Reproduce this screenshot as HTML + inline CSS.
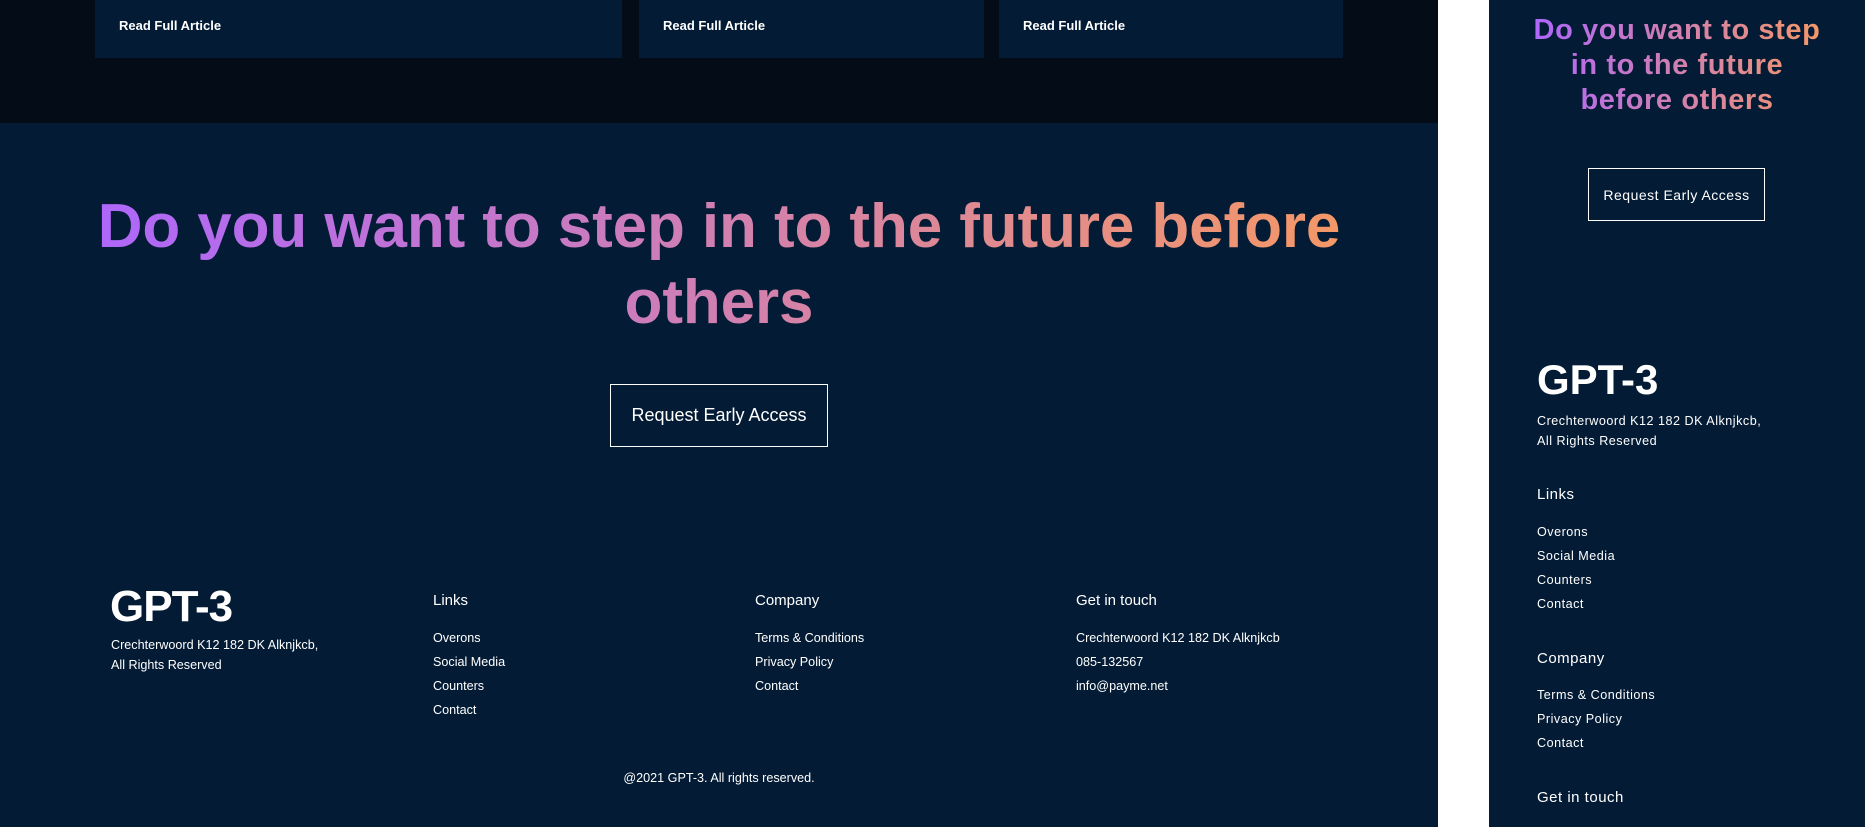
<!DOCTYPE html>
<html><head><meta charset="utf-8"><style>
*{margin:0;padding:0;box-sizing:border-box}
body{width:1865px;height:827px;overflow:hidden;background:#fff;font-family:"Liberation Sans",sans-serif;color:#fff;position:relative}
.abs{position:absolute;white-space:nowrap}
#left{position:absolute;left:0;top:0;width:1438px;height:827px;background:#031b34;overflow:hidden}
#top{position:absolute;left:0;top:0;width:1438px;height:123px;background:#040c17}
.card{position:absolute;top:0;height:58px;background:#031b34}
.card span{position:absolute;left:24px;top:18px;font-weight:bold;font-size:13px}
.grad{display:inline-block;background:linear-gradient(90deg,#ae67fa,#f49867);-webkit-background-clip:text;background-clip:text;color:transparent}
h1{position:absolute;left:0;width:1438px;top:189px;text-align:center;font-size:62px;line-height:76px;font-weight:bold;letter-spacing:-0.1px}
.btn{position:absolute;border:1px solid #fff;display:flex;align-items:center;justify-content:center}
.logo{font-weight:bold;font-size:44px;letter-spacing:-1px}
.sm{font-size:12.6px}
.hd{font-size:15px}
#right{position:absolute;left:1489px;top:0;width:376px;height:827px;background:#031b34;overflow:hidden}
</style></head><body>
<div id="left">
 <div id="top"></div>
 <div class="card" style="left:95px;width:527px"><span>Read Full Article</span></div>
 <div class="card" style="left:639px;width:345px"><span>Read Full Article</span></div>
 <div class="card" style="left:999px;width:344px"><span>Read Full Article</span></div>
 <h1><span class="grad">Do you want to step in to the future before<br>others</span></h1>
 <div class="btn" style="left:610px;top:384px;width:218px;height:63px;font-size:18px">Request Early Access</div>
 <div class="abs logo" style="left:110px;top:582px">GPT-3</div>
 <div class="abs sm" style="left:111px;top:638px">Crechterwoord K12 182 DK Alknjkcb,</div>
 <div class="abs sm" style="left:111px;top:658px">All Rights Reserved</div>
 <div class="abs hd" style="left:433px;top:592px">Links</div>
 <div class="abs sm" style="left:433px;top:631px">Overons</div>
 <div class="abs sm" style="left:433px;top:655px">Social Media</div>
 <div class="abs sm" style="left:433px;top:679px">Counters</div>
 <div class="abs sm" style="left:433px;top:703px">Contact</div>
 <div class="abs hd" style="left:755px;top:592px">Company</div>
 <div class="abs sm" style="left:755px;top:631px">Terms &amp; Conditions</div>
 <div class="abs sm" style="left:755px;top:655px">Privacy Policy</div>
 <div class="abs sm" style="left:755px;top:679px">Contact</div>
 <div class="abs hd" style="left:1076px;top:592px">Get in touch</div>
 <div class="abs sm" style="left:1076px;top:631px">Crechterwoord K12 182 DK Alknjkcb</div>
 <div class="abs sm" style="left:1076px;top:655px">085-132567</div>
 <div class="abs sm" style="left:1076px;top:679px">info@payme.net</div>
 <div class="abs sm" style="left:0;width:1438px;text-align:center;top:771px">@2021 GPT-3. All rights reserved.</div>
</div>
<div id="right">
 <div class="abs" style="left:0;width:376px;top:13px;text-align:center;font-size:29px;font-weight:bold;line-height:35px;white-space:normal;letter-spacing:0.6px"><span class="grad">Do you want to step<br>in to the future<br>before others</span></div>
 <div class="btn" style="left:99px;top:168px;width:177px;height:53px;font-size:14px;letter-spacing:0.5px">Request Early Access</div>
 <div class="abs logo" style="left:48px;top:356px;font-size:42px;letter-spacing:0">GPT-3</div>
 <div class="abs sm" style="left:48px;top:414px;letter-spacing:0.5px">Crechterwoord K12 182 DK Alknjkcb,</div>
 <div class="abs sm" style="left:48px;top:434px;letter-spacing:0.5px">All Rights Reserved</div>
 <div class="abs hd" style="left:48px;top:486px;letter-spacing:0.5px">Links</div>
 <div class="abs sm" style="left:48px;top:525px;letter-spacing:0.5px">Overons</div>
 <div class="abs sm" style="left:48px;top:549px;letter-spacing:0.5px">Social Media</div>
 <div class="abs sm" style="left:48px;top:573px;letter-spacing:0.5px">Counters</div>
 <div class="abs sm" style="left:48px;top:597px;letter-spacing:0.5px">Contact</div>
 <div class="abs hd" style="left:48px;top:650px;letter-spacing:0.5px">Company</div>
 <div class="abs sm" style="left:48px;top:688px;letter-spacing:0.5px">Terms &amp; Conditions</div>
 <div class="abs sm" style="left:48px;top:712px;letter-spacing:0.5px">Privacy Policy</div>
 <div class="abs sm" style="left:48px;top:736px;letter-spacing:0.5px">Contact</div>
 <div class="abs hd" style="left:48px;top:789px;letter-spacing:0.5px">Get in touch</div>
</div>
</body></html>
